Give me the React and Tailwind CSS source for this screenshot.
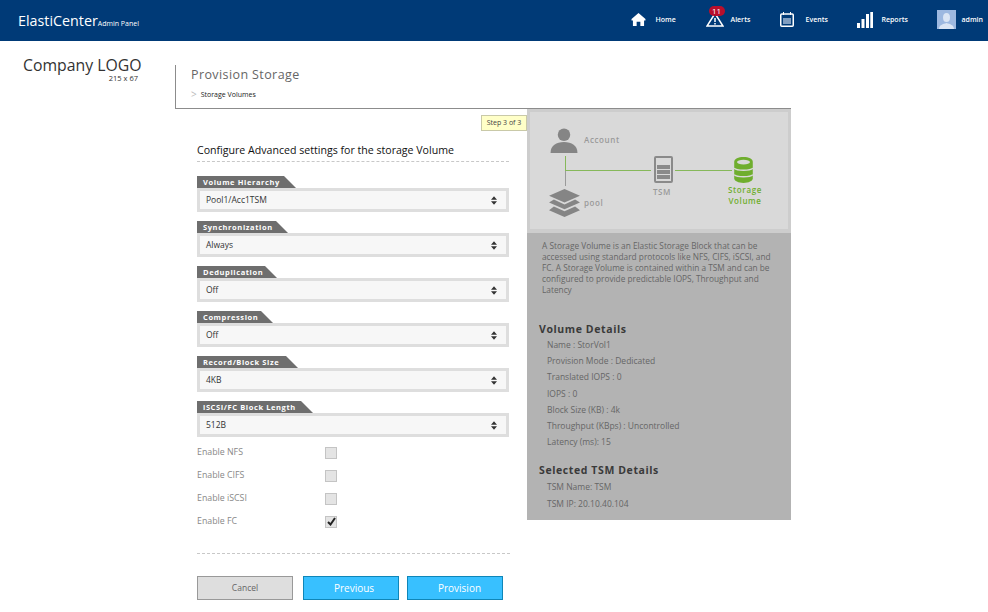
const bodyFont = "font-['Open_Sans','Noto_Sans',sans-serif]";

const fields = [
  { label: "Volume Hierarchy", value: "Pool1/Acc1TSM", width: "w-[99px]" },
  { label: "Synchronization", value: "Always", width: "w-[91px]" },
  { label: "Deduplication", value: "Off", width: "w-[80px]" },
  { label: "Compression", value: "Off", width: "w-[76px]" },
  { label: "Record/Block Size", value: "4KB", width: "w-[101px]" },
  { label: "iSCSI/FC Block Length", value: "512B", width: "w-[116px]" },
];

const checks = [
  { label: "Enable NFS", checked: false },
  { label: "Enable CIFS", checked: false },
  { label: "Enable iSCSI", checked: false },
  { label: "Enable FC", checked: true },
];

const details = [
  "Name : StorVol1",
  "Provision Mode : Dedicated",
  "Translated IOPS : 0",
  "IOPS : 0",
  "Block Size (KB) : 4k",
  "Throughput (KBps) : Uncontrolled",
  "Latency (ms): 15",
];

function NavItem({ icon, label, gap }) {
  return (
    <div className={`flex items-center ${gap}`}>
      <span className="mb-[3px] flex">{icon}</span>
      <span className="text-[7px] font-semibold text-white">{label}</span>
    </div>
  );
}

function Field({ label, value, width }) {
  return (
    <div className="h-[45px]">
      <div className={`h-[12px] ${width} bg-[#6e6e6e] pl-[6px] text-[7.5px] leading-[13px] font-bold tracking-[0.6px] whitespace-nowrap text-white [clip-path:polygon(0_0,calc(100%-12px)_0,100%_100%,0_100%)]`}>
        {label}
      </div>
      <div className="flex h-[24px] w-[312px] items-center justify-between border-[3px] border-[#dedede] bg-[#f7f7f7] pr-[9px] pl-[6px] text-[8.5px] text-[#333]">
        <span>{value}</span>
        <svg width="6" height="9" viewBox="0 0 7 10" className="fill-[#333]">
          <path d="M3.5 0 7 4H0zM0 6h7l-3.5 4z" />
        </svg>
      </div>
    </div>
  );
}

function Diagram() {
  return (
    <div className="relative h-[124px] border-[3px] border-b-[4px] border-[#cdcdcd] bg-[#d9d9d9]">
      {/* account */}
      <svg width="28" height="25" viewBox="0 0 28 26" className="absolute top-[16px] left-[20px] fill-[#858585]">
        <circle cx="14" cy="7" r="6.5" />
        <path d="M0 26c0-8 6-11.5 14-11.5S28 18 28 26z" />
      </svg>
      <span className="absolute top-[22px] left-[54px] text-[8px] font-semibold tracking-[0.6px] text-[#999]">Account</span>
      {/* lines */}
      <div className="absolute top-[44px] left-[35px] h-[14px] w-px bg-[#86b85a]" />
      <div className="absolute top-[58px] left-[35px] h-[16px] w-px bg-[#9a9a9a]" />
      <div className="absolute top-[58px] left-[35px] h-px w-[86px] bg-[#86b85a]" />
      <div className="absolute top-[58px] left-[145px] h-px w-[57px] bg-[#86b85a]" />
      {/* tsm */}
      <div className="absolute top-[44px] left-[124px] flex h-[27px] w-[19px] flex-col justify-end gap-px rounded-[2px] border-2 border-[#8a8a8a] bg-[#d9d9d9] px-px pb-[2px]">
        <div className="h-[4px] bg-[#8a8a8a]" />
        <div className="h-[4px] bg-[#8a8a8a]" />
        <div className="h-[4px] bg-[#8a8a8a]" />
      </div>
      <span className="absolute top-[74px] left-[123px] text-[8px] font-semibold tracking-[0.6px] text-[#999]">TSM</span>
      {/* volume */}
      <svg width="19" height="26" viewBox="0 0 20 28" className="absolute top-[45px] left-[204px]">
        <path fill="#6fae2e" d="M0 5C0 2 4.500 0 10 0s10 2 10 5v18c0 3-4.500 5-10 5S0 26 0 23z" />
        <ellipse cx="10" cy="5.500" rx="7" ry="2.500" fill="#d9d9d9" />
        <path stroke="#d9d9d9" strokeWidth="1.500" fill="none" d="M0 12c2 3 18 3 20 0M0 19c2 3 18 3 20 0" />
      </svg>
      <span className="absolute top-[73px] left-[197px] w-[36px] text-center text-[8px] leading-[10.500px] font-semibold tracking-[0.6px] text-[#6fae2e]">
        Storage Volume
      </span>
      {/* pool */}
      <svg width="31" height="28" viewBox="0 0 32 29" className="absolute top-[77px] left-[19px] fill-[#858585]">
        <path d="M16 0 32 7 16 14 0 7z" />
        <path d="M5 11 16 16 27 11 32 14 16 21 0 14z" />
        <path d="M5 18 16 23 27 18 32 22 16 29 0 22z" />
      </svg>
      <span className="absolute top-[85px] left-[54px] text-[8px] font-semibold tracking-[0.6px] text-[#999]">pool</span>
    </div>
  );
}

export default function App() {
  return (
    <div className={`h-[612px] w-[988px] overflow-hidden bg-white ${bodyFont}`}>
      <header className="flex h-[41px] items-center justify-between bg-[#003a77] pr-[5px] pl-[18px]">
        <div className="flex items-baseline text-white">
          <span className="text-[14.3px]">ElastiCenter</span>
          <span className="text-[7px] font-medium">Admin Panel</span>
        </div>
        <div className="flex items-center">
          <div className="w-[75px]">
            <NavItem
              label="Home"
              gap="gap-[10px]"
              icon={
                <svg width="15" height="13" viewBox="0 0 15 14" className="fill-white">
                  <path d="M7.500 0 15 6.500V8h-1.500v6H9.500V9.500h-4V14H1.500V8H0V6.500z" />
                </svg>
              }
            />
          </div>
          <div className="relative w-[74px]">
            <NavItem
              label="Alerts"
              gap="gap-[7px]"
              icon={
                <svg width="18" height="15" viewBox="0 0 18 15" fill="none" stroke="#fff" strokeWidth="1.500">
                  <path d="M9 1.500 1 14h16zM9 6v4M9 11v1.500" />
                </svg>
              }
            />
            <div className="absolute top-[-6px] left-[3px] flex h-[10px] w-[16px] items-center justify-center rounded-[5px] bg-[#b80f2c] text-[8px] text-white">
              11
            </div>
          </div>
          <div className="w-[77px]">
            <NavItem
              label="Events"
              gap="gap-[12px]"
              icon={
                <svg width="14" height="15" viewBox="0 0 14 15">
                  <rect x="0.750" y="2" width="12.500" height="12.250" rx="1" fill="none" stroke="#fff" strokeWidth="1.500" />
                  <path fill="#fff" d="M3 0h1v3H3zM10 0h1v3h-1z" />
                  <rect x="3" y="6" width="8" height="6" fill="#7f9dc0" />
                </svg>
              }
            />
          </div>
          <div className="w-[80px]">
            <NavItem
              label="Reports"
              gap="gap-[9px]"
              icon={
                <svg width="16" height="17" viewBox="0 0 16 17" className="fill-white">
                  <path d="M0 12h3v5H0zM4.500 8h3v9h-3zM9 3h3v14H9zM13.300 1H16v16h-2.700z" />
                </svg>
              }
            />
          </div>
          <NavItem
            label="admin"
            gap="gap-[6px]"
            icon={
              <svg width="19" height="19" viewBox="0 0 19 19">
                <rect width="19" height="19" fill="#9db8e0" />
                <ellipse cx="9.500" cy="7.500" rx="3.500" ry="4.500" fill="#dbe5f4" />
                <path d="M2 19c0-4 4-5 7.500-6 3.500 1 7.500 2 7.500 6z" fill="#dbe5f4" />
              </svg>
            }
          />
        </div>
      </header>

      <div className="flex">
        <div className="w-[175px] shrink-0 pt-[15px] pl-[23px] leading-none text-[#333]">
          <div className="text-[15.8px] leading-[18px]">Company LOGO</div>
          <div className="w-[115px] text-right text-[7.500px] leading-[9px]">215 x 67</div>
        </div>

        <div className="w-[616px]">
          <div className="mt-[24px] h-[44px] border-b border-l border-[#8c8c8c] pt-[1px] pl-[15px]">
            <h1 className="text-[12.5px] leading-[17px] tracking-[0.4px] text-[#666]">Provision Storage</h1>
            <div className="mt-[7px] flex items-center gap-[4px] text-[7px] leading-[9px] text-[#222]">
              <span className="text-[10px] text-[#bbb]">&gt;</span>
              <span>Storage Volumes</span>
            </div>
          </div>

          <div className="flex">
            <div className="w-[352px] pl-[22px]">
              <div className="flex justify-end">
                <div className="mt-[6px] h-[16px] w-[46px] border border-[#c9c9a8] bg-[#ffffc8] text-center text-[7px] leading-[14px] text-[#444]">
                  Step 3 of 3
                </div>
              </div>
              <div className="mt-[12px] h-[19px] w-[312px] border-b border-dashed border-[#c8c8c8] text-[10.6px] leading-[15px] text-[#111]">
                Configure Advanced settings for the storage Volume
              </div>
              <div className="mt-[14px]">
                {fields.map((f) => (
                  <Field key={f.label} {...f} />
                ))}
              </div>
              <div className="mt-[-5px]">
                {checks.map((c) => (
                  <div key={c.label} className="flex h-[23px] items-center text-[8.8px] text-[#888]">
                    <span className="w-[128px]">{c.label}</span>
                    <span className="flex h-[12px] w-[12px] items-center justify-center border border-[#c4c4c4] bg-[#e4e4e4]">
                      {c.checked && (
                        <svg width="9" height="9" viewBox="0 0 9 9" fill="none" stroke="#222" strokeWidth="2">
                          <path d="M1 5l2.500 2.500L8 1" />
                        </svg>
                      )}
                    </span>
                  </div>
                ))}
              </div>
              <div className="mt-[20px] w-[313px] border-t border-dashed border-[#c8c8c8]" />
              <div className="mt-[22px] flex text-[10px]">
                <button className="h-[24px] w-[96px] border border-[#999] bg-[#dedede] text-[8.500px] text-[#666]">Cancel</button>
                <button className="ml-[10px] h-[24px] w-[96px] border border-[#0f86b8] bg-[#38c0ff] pl-[6px] font-medium text-white">Previous</button>
                <button className="ml-[8px] h-[24px] w-[96px] border border-[#0f86b8] bg-[#38c0ff] pl-[9px] font-medium text-white">Provision</button>
              </div>
            </div>

            <aside className="h-[411px] w-[264px] bg-[#b3b3b3]">
              <Diagram />
              <p className="pt-[7px] pr-[18px] pl-[15px] text-[8.3px] leading-[11px] text-[#666]">
                A Storage Volume is an Elastic Storage Block that can be accessed using standard protocols like NFS, CIFS, iSCSI, and FC. A Storage Volume is contained within a TSM and can be configured to provide predictable IOPS, Throughput and Latency
              </p>
              <h2 className="mt-[27px] pl-[12px] text-[10.500px] leading-[14px] font-bold tracking-[0.6px] text-[#3a3a3a]">Volume Details</h2>
              <div className="mt-[1px] pl-[20px]">
                {details.map((d) => (
                  <div key={d} className="text-[8.5px] leading-[16.200px] text-[#666]">{d}</div>
                ))}
              </div>
              <h2 className="mt-[13px] pl-[12px] text-[10.500px] leading-[14px] font-bold tracking-[0.6px] text-[#3a3a3a]">Selected TSM Details</h2>
              <div className="mt-[2px] pl-[20px]">
                <div className="text-[8.5px] leading-[16.200px] text-[#666]">TSM Name: TSM</div>
                <div className="text-[8.5px] leading-[16.200px] text-[#666]">TSM IP: 20.10.40.104</div>
              </div>
            </aside>
          </div>
        </div>
      </div>
    </div>
  );
}
